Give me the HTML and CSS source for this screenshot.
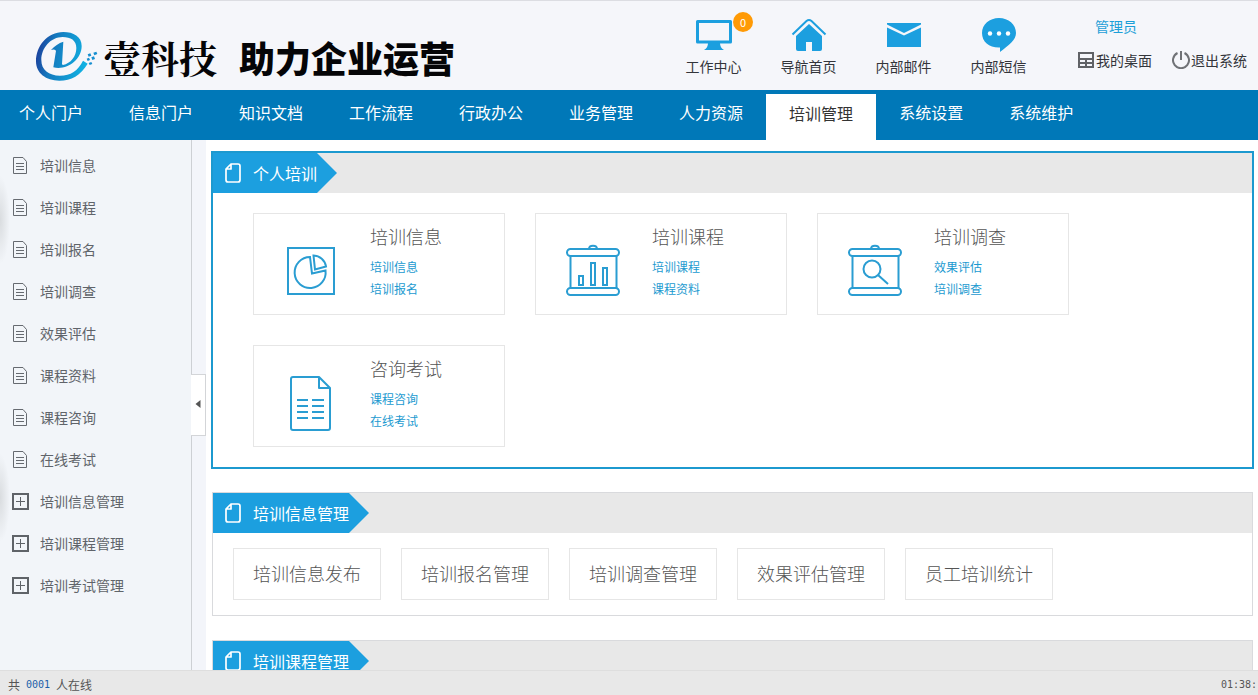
FILE: index.html
```html
<!DOCTYPE html>
<html lang="zh-CN">
<head>
<meta charset="utf-8">
<title>培训管理</title>
<link rel="stylesheet" href="styles.css">
</head>
<body>
<svg class="defs" aria-hidden="true">
  <symbol id="doc" viewBox="0 0 16 18"><path d="M1.500 1.500H11L14.500 5.500V17.500H1.500Z" fill="none" stroke="#666a70"/><path d="M4 7.500H12M4 10.500H12M4 13.500H12" stroke="#666a70"/></symbol>
  <symbol id="plus" viewBox="0 0 18 18"><path d="M1 2H16V17H1Z" fill="none" stroke="#5f6368" stroke-width="2"/><path d="M4 9.500H13M8.500 5V14" stroke="#5f6368"/></symbol>
  <symbol id="page" viewBox="0 0 16 20"><path d="M6 1H13Q15 1 15 3V17Q15 19 13 19H3Q1 19 1 17V6ZM6 1V6H1" fill="none" stroke="#fff" stroke-width="1.700" stroke-linejoin="round"/></symbol>
  <symbol id="board" viewBox="0 0 60 60"><g fill="none" stroke="#2a9dd2" stroke-width="2"><rect x="4" y="8" width="52" height="7" rx="3.500"/><rect x="4" y="47" width="52" height="7" rx="3.500"/><path d="M7.500 15V47M53.500 15V47M26 8C26 3.500 34 3.500 34 8"/></g></symbol>
</svg>

<header class="header">
  <div class="brand">
    <svg class="brand-mark" viewBox="0 0 186 150" aria-hidden="true">
      <defs><linearGradient id="g" x1="0" y1=".4" x2="1" y2=".6"><stop offset="0" stop-color="#1c3f9c"/><stop offset=".3" stop-color="#1478bd"/><stop offset="1" stop-color="#10b4e4"/></linearGradient></defs>
      <path d="M52 106C92 116 137 84 137 42C137 14 112 0 82 0C34 0 0 42 0 88C0 124 30 146 70 146C106 146 134 130 155 95L141 86C126 116 104 131 72 131C38 131 16 114 16 84C16 48 44 15 80 15C104 15 121 25 121 48C121 74 104 94 81 99L78 97L82 29C68 33 56 42 45 54C51 51 56 52 60 56Z" fill="url(#g)"/>
      <path d="M155 67l8-3 3 7-8 3zM172 62l9-3 3 7-9 4zM152 80l7-3 3 7-7 3zM166 76l8-3 3 8-8 3zM158 93l8-3 3 6-8 3z" fill="#168fd0"/>
    </svg>
    <span class="brand-name">壹科技</span>
    <span class="brand-slogan">助力企业运营</span>
  </div>
  <nav class="tools" aria-label="快捷入口">
    <a href="#"><svg viewBox="0 0 36 36"><path d="M1.500 4.500H34.500V25H1.500Z" fill="none" stroke="#1c9fdf" stroke-width="3" stroke-linejoin="round"/><path d="M12 26H24Q24 31 28 33H8Q12 31 12 26Z" fill="#1c9fdf"/></svg>工作中心<span class="badge">0</span></a>
    <a href="#"><svg viewBox="0 0 36 36"><path d="M1.500 17.500L15.500 4Q18 2 20.500 4L34.500 17.500" fill="none" stroke="#1c9fdf" stroke-width="2"/><path d="M5 19L18 7L31 19V32Q31 34 29 34H21V25H15V34H7Q5 34 5 32Z" fill="#1c9fdf"/></svg>导航首页</a>
    <a href="#"><svg viewBox="0 0 36 36"><path d="M1 6H35V7.500L18 16L1 7.500ZM1 10.500L18 18.500L35 10.500V30H1Z" fill="#1c9fdf"/></svg>内部邮件</a>
    <a href="#"><svg viewBox="0 0 36 36"><path d="M18 1C27.500 1 35 7.500 35 16C35 23 28 28 19 35V30.500C8.500 31 1 25 1 16C1 7.500 8.500 1 18 1Z" fill="#1c9fdf"/><g fill="#fff"><circle cx="9" cy="16.500" r="2.200"/><circle cx="18" cy="16.500" r="2.200"/><circle cx="27" cy="16.500" r="2.200"/></g></svg>内部短信</a>
  </nav>
  <div class="user">
    <a class="user-name" href="#">管理员</a>
    <div class="user-links">
      <a href="#"><svg viewBox="0 0 18 18"><path d="M1 1H17V17H1ZM3 3V7H15V3ZM3 9V11H8V9ZM10 9V11H15V9ZM3 13V15H8V13ZM10 13V15H15V13Z" fill="#606266" fill-rule="evenodd"/></svg>我的桌面</a>
      <a href="#"><svg viewBox="0 0 18 18"><path d="M5.500 2A8 8 0 1 0 12.500 2M9 0V9" fill="none" stroke="#707276" stroke-width="2"/></svg>退出系统</a>
    </div>
  </div>
</header>

<nav class="menu" aria-label="主菜单">
  <a href="#">个人门户</a><a href="#">信息门户</a><a href="#">知识文档</a><a href="#">工作流程</a><a href="#">行政办公</a><a href="#">业务管理</a><a href="#">人力资源</a><a class="active" href="#">培训管理</a><a href="#">系统设置</a><a href="#">系统维护</a>
</nav>

<div class="body">
  <aside class="sidebar">
    <nav class="side-list" aria-label="培训管理">
      <a href="#"><svg class="i-doc"><use href="#doc"/></svg>培训信息</a>
      <a href="#"><svg class="i-doc"><use href="#doc"/></svg>培训课程</a>
      <a href="#"><svg class="i-doc"><use href="#doc"/></svg>培训报名</a>
      <a href="#"><svg class="i-doc"><use href="#doc"/></svg>培训调查</a>
      <a href="#"><svg class="i-doc"><use href="#doc"/></svg>效果评估</a>
      <a href="#"><svg class="i-doc"><use href="#doc"/></svg>课程资料</a>
      <a href="#"><svg class="i-doc"><use href="#doc"/></svg>课程咨询</a>
      <a href="#"><svg class="i-doc"><use href="#doc"/></svg>在线考试</a>
      <a href="#"><svg class="i-plus"><use href="#plus"/></svg>培训信息管理</a>
      <a href="#"><svg class="i-plus"><use href="#plus"/></svg>培训课程管理</a>
      <a href="#"><svg class="i-plus"><use href="#plus"/></svg>培训考试管理</a>
    </nav>
  </aside>
  <div class="splitter">
    <button class="collapse" type="button" aria-label="收起"><svg viewBox="0 0 6 8"><path d="M5.500 0V8L.5 4Z" fill="#555"/></svg></button>
  </div>
  <main class="main">
    <section class="panel current">
      <div class="panel-head"><h2><svg><use href="#page"/></svg>个人培训</h2></div>
      <div class="cards">
        <article class="card">
          <svg viewBox="0 0 60 60"><g fill="none" stroke="#2a9dd2" stroke-width="2"><rect x="7" y="7" width="46" height="46"/><path d="M29 16A15.500 15.500 0 1 0 44.500 29.500L31 32.500Z"/><path d="M32.500 14.500A13 13 0 0 1 45 25.500L34 28.500Z"/></g></svg>
          <div><h3>培训信息</h3><a href="#">培训信息</a><a href="#">培训报名</a></div>
        </article>
        <article class="card">
          <svg viewBox="0 0 60 60"><use href="#board"/><g fill="none" stroke="#2a9dd2" stroke-width="2"><rect x="16" y="35" width="4" height="9"/><rect x="28" y="22" width="4" height="22"/><rect x="40" y="27" width="4" height="17"/></g></svg>
          <div><h3>培训课程</h3><a href="#">培训课程</a><a href="#">课程资料</a></div>
        </article>
        <article class="card">
          <svg viewBox="0 0 60 60"><use href="#board"/><g fill="none" stroke="#2a9dd2" stroke-width="2"><circle cx="27" cy="28" r="8.500"/><path d="M33 34L43 43"/></g></svg>
          <div><h3>培训调查</h3><a href="#">效果评估</a><a href="#">培训调查</a></div>
        </article>
        <article class="card">
          <svg viewBox="0 0 60 60"><g fill="none" stroke="#2a9dd2" stroke-width="2" stroke-linejoin="round"><path d="M38 4H12Q10 4 10 6V55Q10 57 12 57H47Q49 57 49 55V15ZM38 4V15H49"/><path d="M16 27H27M31 27H43M16 33H27M31 33H43M16 39H27M31 39H43M16 45H27M31 45H43"/></g></svg>
          <div><h3>咨询考试</h3><a href="#">课程咨询</a><a href="#">在线考试</a></div>
        </article>
      </div>
    </section>
    <section class="panel">
      <div class="panel-head"><h2><svg><use href="#page"/></svg>培训信息管理</h2></div>
      <div class="actions">
        <a href="#">培训信息发布</a><a href="#">培训报名管理</a><a href="#">培训调查管理</a><a href="#">效果评估管理</a><a href="#">员工培训统计</a>
      </div>
    </section>
    <section class="panel">
      <div class="panel-head"><h2><svg><use href="#page"/></svg>培训课程管理</h2></div>
    </section>
  </main>
</div>

<footer class="status">
  <span>共</span><span class="count">0001</span><span>人在线</span><time>01:38:</time>
</footer>
</body>
</html>
```
FILE: styles.css
```css
* { box-sizing: border-box; }

body {
  margin: 0;
  height: 100vh;
  display: flex;
  flex-direction: column;
  overflow: hidden;
  background: #fff;
  color: #33353a;
  font-family: "Noto Sans CJK SC", sans-serif;
  font-size: 14px;
  font-weight: 400;
}

a { color: inherit; text-decoration: none; }
h2, h3 { margin: 0; }
svg { display: block; flex: none; }
.defs { position: absolute; width: 0; height: 0; }

/* Header */
.header {
  flex: none;
  display: flex;
  height: 90px;
  padding: 0 11px 0 36px;
  border-top: 1px solid #dcdde2;
  background: #f5f6fa;
}

.brand {
  display: flex;
  align-items: center;
  padding-top: 22px;
  color: #050507;
  line-height: 50px;
  white-space: nowrap;
}
.brand-mark { width: 62px; height: 50px; }
.brand-name {
  margin-left: 5px;
  font-family: "Noto Serif CJK SC", "Noto Sans CJK SC", serif;
  font-size: 38px;
  font-weight: 700;
}
.brand-slogan { margin-left: 22px; font-size: 36px; font-weight: 900; }

.tools { display: flex; margin-left: auto; }
.tools a {
  position: relative;
  display: flex;
  flex-direction: column;
  align-items: center;
  width: 95px;
  padding-top: 16px;
  line-height: 26px;
}
.tools svg { width: 36px; height: 36px; }
.badge {
  position: absolute;
  top: 11px;
  left: 67px;
  width: 20px;
  height: 20px;
  border-radius: 50%;
  background: #ff9a05;
  color: #fff;
  font-size: 11px;
  line-height: 20px;
  text-align: center;
}

.user { margin-left: 31px; padding-top: 11px; white-space: nowrap; }
.user-name { display: block; padding-left: 18px; color: #1c9fd8; line-height: 28px; }
.user-links { display: flex; gap: 20px; padding-top: 6px; line-height: 28px; }
.user-links a { display: flex; align-items: center; gap: 1px; }
.user-links svg { width: 18px; height: 18px; }

/* Main menu */
.menu {
  flex: none;
  display: flex;
  height: 50px;
  background: #0078b8;
  color: #fff;
  font-size: 16px;
  line-height: 44px;
  white-space: nowrap;
}
.menu a { padding: 0 23px; }
.menu a:first-child { padding-left: 19px; }
.menu .active {
  margin-top: 4px;
  background: #fff;
  color: #333;
  line-height: 38px;
}

/* Body */
.body { flex: 1; display: flex; min-height: 0; }

.sidebar {
  flex: none;
  width: 191px;
  padding-top: 5px;
  overflow: hidden;
  background:
    radial-gradient(10px 44px at 0 80px, #d9dcdf, transparent),
    radial-gradient(10px 44px at 0 358px, #d9dcdf, transparent),
    #f2f5f9;
  color: #60646a;
}
.side-list a {
  display: grid;
  grid-template-columns: 28px 1fr;
  align-items: center;
  height: 42px;
  padding: 0 0 2px 12px;
}
.i-doc { width: 16px; height: 18px; }
.i-plus { width: 18px; height: 18px; }

.splitter {
  position: relative;
  flex: none;
  width: 15px;
  border-left: 1px solid #cdd0d4;
  background: #f3f5fa;
}
.collapse {
  position: absolute;
  top: 234px;
  left: -1px;
  display: flex;
  align-items: center;
  justify-content: center;
  width: 15px;
  height: 62px;
  padding: 0 1px 2px 0;
  border: 1px solid #d3d5d8;
  border-left: 0;
  background: #fff;
}
.collapse svg { width: 6px; height: 8px; }

.main {
  flex: 1;
  display: flex;
  flex-direction: column;
  gap: 24px;
  min-width: 0;
  padding: 12px 5px 0 6px;
  overflow: hidden;
}

.panel { flex: none; border: 1px solid #d9dadd; }
.panel.current { margin: -1px; border: 2px solid #1c99cf; }
.panel-head { display: flex; background: #e8e8e8; }
.panel-head h2 {
  display: flex;
  align-items: center;
  gap: 12px;
  padding: 0 20px 0 12px;
  background: #1c9fdf;
  clip-path: polygon(0 0, calc(100% - 20px) 0, 100% 50%, calc(100% - 20px) 100%, 0 100%);
  color: #fff;
  font-size: 16px;
  font-weight: 400;
  line-height: 40px;
}
.panel-head svg { width: 16px; height: 20px; }

.cards {
  display: grid;
  grid-template-columns: repeat(auto-fill, 252px);
  gap: 30px;
  padding: 20px 40px;
}
.card {
  display: flex;
  gap: 29px;
  height: 102px;
  padding: 9px 0 0 27px;
  border: 1px solid #e6e6e6;
}
.card > svg { width: 60px; height: 60px; margin-top: 18px; }
.card h3 {
  margin-bottom: 7px;
  color: #555;
  font-size: 18px;
  font-weight: 300;
  line-height: 26px;
}
.card a { display: block; color: #1c9ad0; font-size: 12px; line-height: 22px; }

.actions { display: flex; flex-wrap: wrap; gap: 20px; padding: 15px 20px; }
.actions a {
  padding: 0 19px 2px;
  border: 1px solid #e6e6e6;
  color: #555;
  font-size: 18px;
  font-weight: 300;
  line-height: 48px;
}

/* Status bar */
.status {
  flex: none;
  display: flex;
  gap: 6px;
  height: 25px;
  padding: 2px 1px 0 8px;
  border-top: 1px solid #dedede;
  background: #e8e8e8;
  color: #555;
  font-size: 12px;
  line-height: 24px;
}
.count, .status time { font-family: "DejaVu Sans Mono", monospace; font-size: 10px; }
.count { color: #1a5fa8; }
.status time { margin-left: auto; }
```
